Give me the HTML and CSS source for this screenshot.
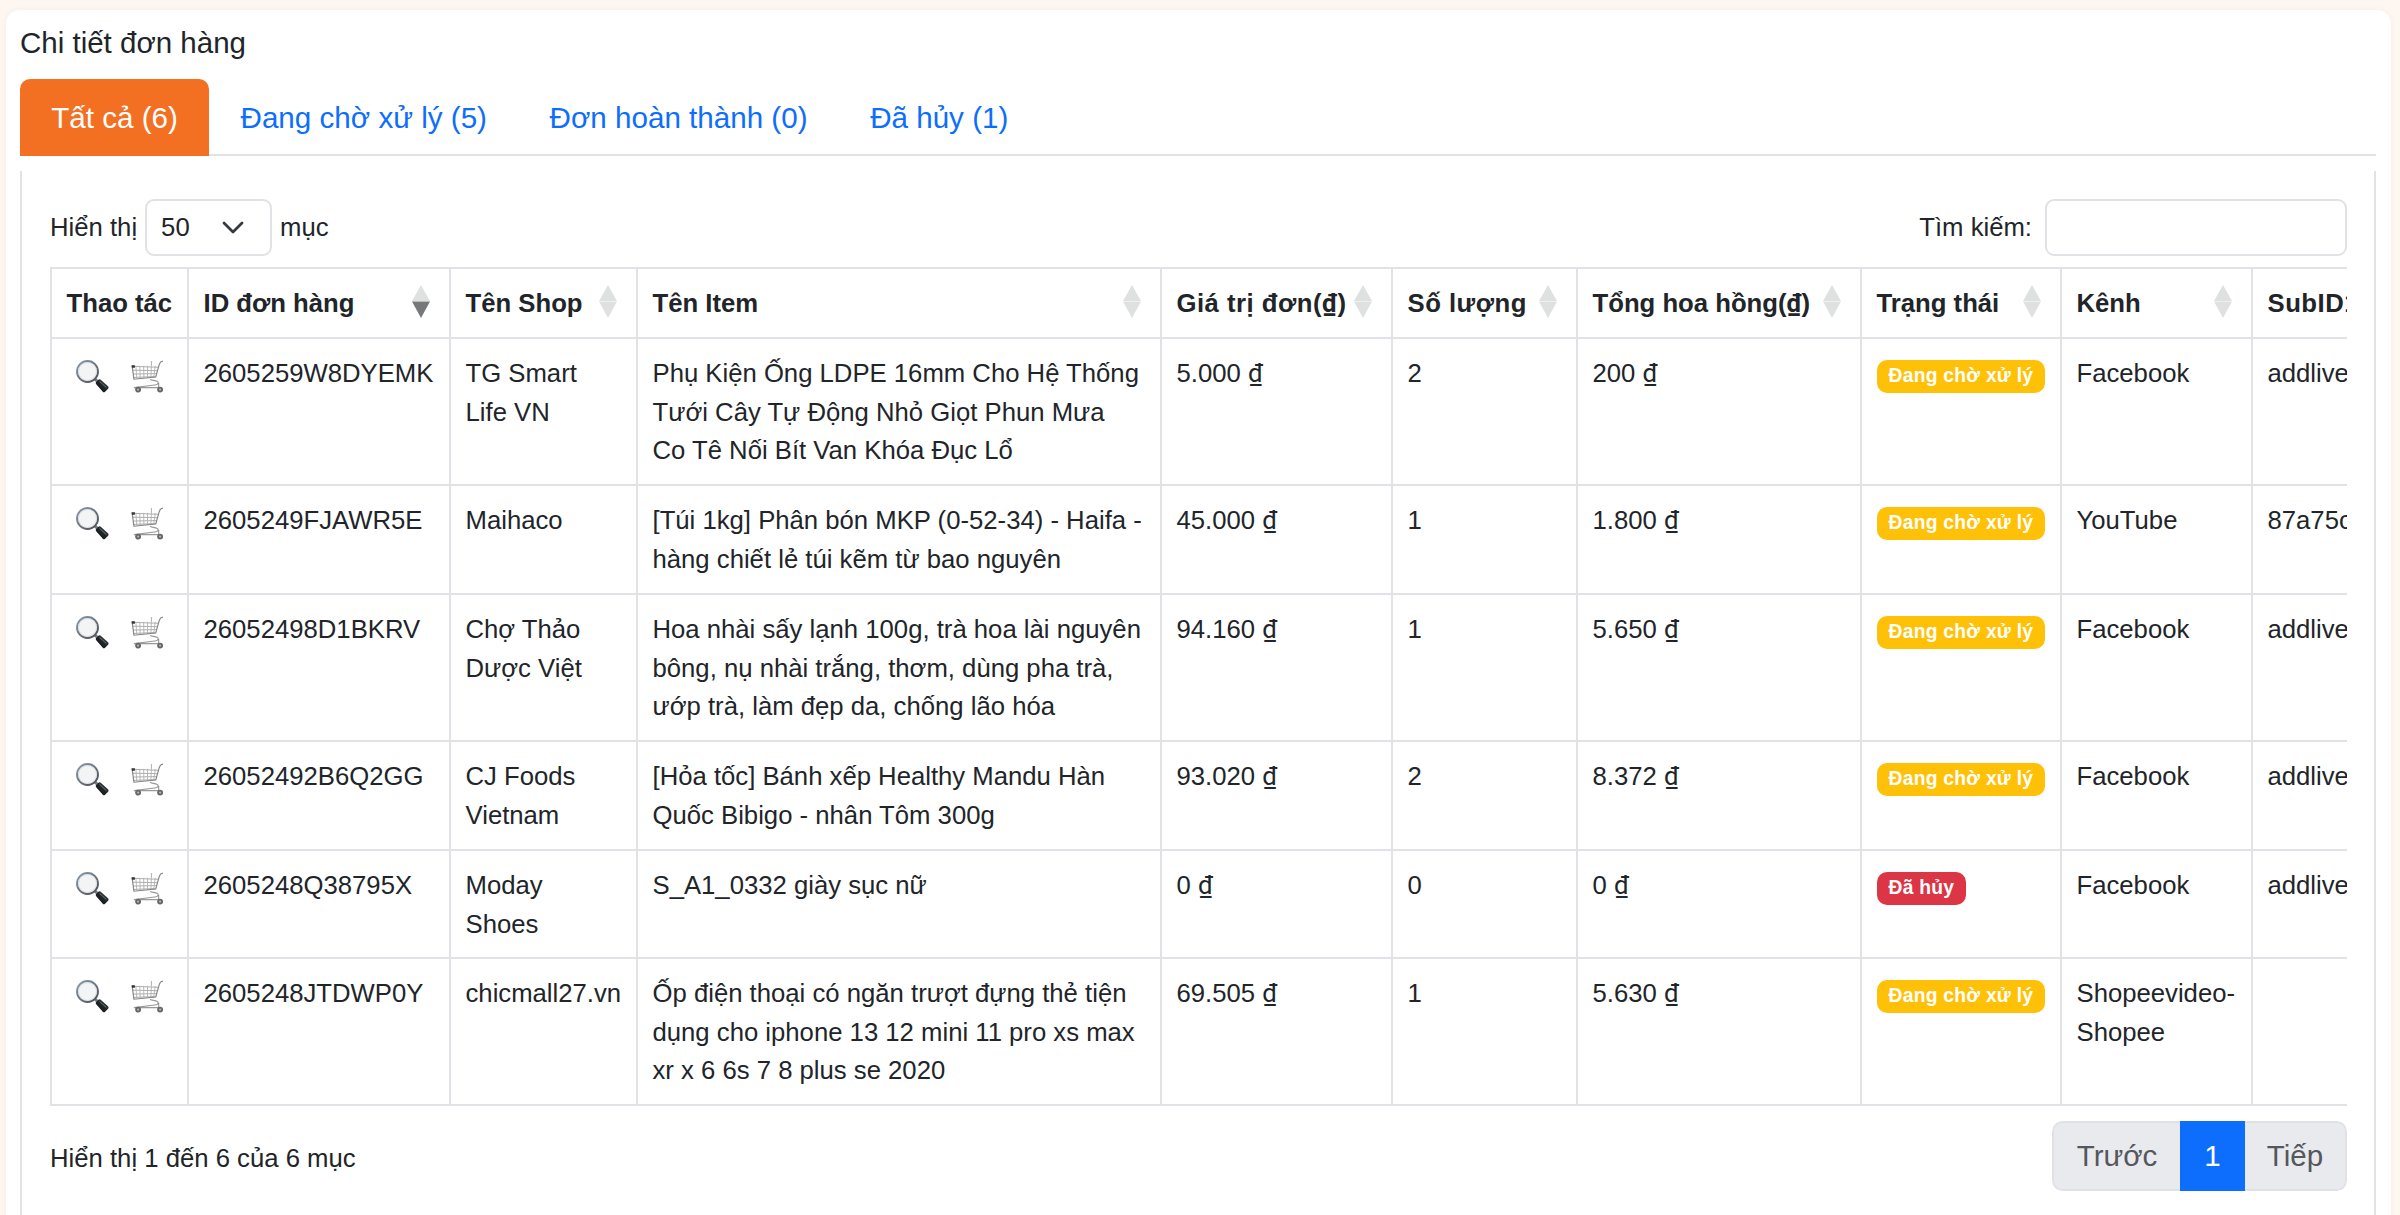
FILE: index.html
```html
<!DOCTYPE html>
<html lang="vi">
<head>
<meta charset="utf-8">
<title>Chi tiết đơn hàng</title>
<link rel="stylesheet" href="styles.css">
</head>
<body>
<svg class="defs" width="0" height="0" aria-hidden="true">
  <defs>
    <linearGradient id="rim" x1="0" y1="0" x2="1" y2="1"><stop offset="0" stop-color="#8a9cb0"/><stop offset="1" stop-color="#4a4d50"/></linearGradient>
    <linearGradient id="grip" x1="0" y1="1" x2="1" y2="0"><stop offset="0" stop-color="#0d0f10"/><stop offset=".6" stop-color="#24292b"/><stop offset="1" stop-color="#566060"/></linearGradient>
  </defs>
  <symbol id="magnifier" viewBox="0 0 33 33">
    <path d="M19 19l3 3" stroke="#77797b" stroke-width="3"/>
    <circle cx="11.500" cy="11.500" r="10.500" fill="#f3f4f5" stroke="url(#rim)" stroke-width="1.900"/>
    <circle cx="11.500" cy="11.500" r="9" fill="none" stroke="#d5d8da" stroke-width=".8"/>
    <path d="M20.200 24.200q-1-1.200 0-2.300l2.200-2.200q1.200-1 2.300 0l7.300 6.600q1.200 1.200.1 2.400l-3 3q-1.200 1.100-2.300 0z" fill="url(#grip)"/>
    <path d="M23.500 21.300l6.800 6.200" stroke="#7b8585" stroke-width=".9"/>
  </symbol>
  <symbol id="cart" viewBox="0 0 34 34">
    <g fill="none" stroke="#a0a0a0" stroke-width=".9">
      <path d="M1.500 6.500L28 7.500M2 10.500l25 .5M2.300 14.500l23.700-.5M2.700 18l22.300-1M21 1v5"/>
      <path d="M5 6l1 13M9 6l.5 13M13 6l.3 12.500M17 6v12.500M21 6l-.5 12M25 6l-1.500 11.500" stroke="#b0b0b0"/>
      <path d="M33 1c-3 .5-3.500 2-4 4l-3.500 12.500L3 19.800 1.200 6" stroke="#858585" stroke-width="1.200"/>
      <path d="M20 19.500c0 2 8 1 8 4 0 2-3 2.500-6 2.500L3 28.500h25.500v-5" stroke="#999" stroke-width="1.200"/>
    </g>
    <path d="M.5 5.500h3.500v2.500H1z" fill="#333"/>
    <g fill="#b5b5b5" stroke="#666" stroke-width="1.900"><circle cx="7.300" cy="30.500" r="2.100"/><circle cx="30" cy="30.500" r="2.100"/></g>
  </symbol>
  <symbol id="sort" viewBox="0 0 18 33"><path d="M9 0l9 16H0z" fill="#dfe1e0"/><path d="M0 16.500h18L9 33z"/></symbol>
</svg>
<main class="card">
  <h1 class="title">Chi tiết đơn hàng</h1>
  <nav class="tabs">
    <a class="tab active">Tất cả (6)</a>
    <a class="tab">Đang chờ xử lý (5)</a>
    <a class="tab">Đơn hoàn thành (0)</a>
    <a class="tab">Đã hủy (1)</a>
  </nav>
  <section class="panel">
    <div class="controls">
      <div class="length"><span>Hiển thị</span><div class="select"><span>50</span><svg width="22" height="14" viewBox="0 0 22 14"><path d="M2 2l9 9 9-9" fill="none" stroke="#343a40" stroke-width="2.800" stroke-linecap="round" stroke-linejoin="round"/></svg></div><span>mục</span></div>
      <label class="search"><span>Tìm kiếm:</span><input type="text"></label>
    </div>
    <div class="scroll">
      <table>
        <colgroup><col class="c1"><col class="c2"><col class="c3"><col class="c4"><col class="c5"><col class="c6"><col class="c7"><col class="c8"><col class="c9"><col class="c10"></colgroup>
        <thead>
          <tr class="head">
            <th>Thao tác</th>
            <th><div class="th">ID đơn hàng<svg class="sort desc"><use href="#sort"/></svg></div></th>
            <th><div class="th">Tên Shop<svg class="sort"><use href="#sort"/></svg></div></th>
            <th><div class="th">Tên Item<svg class="sort"><use href="#sort"/></svg></div></th>
            <th><div class="th"><span class="wide">Giá trị đơn(<span class="dong">₫</span>)</span><svg class="sort"><use href="#sort"/></svg></div></th>
            <th><div class="th"><span class="wide">Số lượng</span><svg class="sort"><use href="#sort"/></svg></div></th>
            <th><div class="th"><span>Tổng hoa hồng(<span class="dong">₫</span>)</span><svg class="sort"><use href="#sort"/></svg></div></th>
            <th><div class="th">Trạng thái<svg class="sort"><use href="#sort"/></svg></div></th>
            <th><div class="th">Kênh<svg class="sort"><use href="#sort"/></svg></div></th>
            <th><span class="wide">SubID1</span></th>
          </tr>
        </thead>
        <tbody>
          <tr class="tall"><td><div class="actions"><svg><use href="#magnifier"/></svg><svg><use href="#cart"/></svg></div></td><td>2605259W8DYEMK</td><td>TG Smart<br>Life VN</td><td>Phụ Kiện Ống LDPE 16mm Cho Hệ Thống<br>Tưới Cây Tự Động Nhỏ Giọt Phun Mưa<br>Co Tê Nối Bít Van Khóa Đục Lổ</td><td>5.000 <span class="dong">₫</span></td><td>2</td><td>200 <span class="dong">₫</span></td><td><span class="badge">Đang chờ xử lý</span></td><td>Facebook</td><td>addlive</td></tr>
          <tr class="mid"><td><div class="actions"><svg><use href="#magnifier"/></svg><svg><use href="#cart"/></svg></div></td><td>2605249FJAWR5E</td><td>Maihaco</td><td>[Túi 1kg] Phân bón MKP (0-52-34) - Haifa -<br>hàng chiết lẻ túi kẽm từ bao nguyên</td><td>45.000 <span class="dong">₫</span></td><td>1</td><td>1.800 <span class="dong">₫</span></td><td><span class="badge">Đang chờ xử lý</span></td><td>YouTube</td><td>87a75c</td></tr>
          <tr class="tall"><td><div class="actions"><svg><use href="#magnifier"/></svg><svg><use href="#cart"/></svg></div></td><td>26052498D1BKRV</td><td>Chợ Thảo<br>Dược Việt</td><td>Hoa nhài sấy lạnh 100g, trà hoa lài nguyên<br>bông, nụ nhài trắng, thơm, dùng pha trà,<br>ướp trà, làm đẹp da, chống lão hóa</td><td>94.160 <span class="dong">₫</span></td><td>1</td><td>5.650 <span class="dong">₫</span></td><td><span class="badge">Đang chờ xử lý</span></td><td>Facebook</td><td>addlive</td></tr>
          <tr class="mid"><td><div class="actions"><svg><use href="#magnifier"/></svg><svg><use href="#cart"/></svg></div></td><td>26052492B6Q2GG</td><td>CJ Foods<br>Vietnam</td><td>[Hỏa tốc] Bánh xếp Healthy Mandu Hàn<br>Quốc Bibigo - nhân Tôm 300g</td><td>93.020 <span class="dong">₫</span></td><td>2</td><td>8.372 <span class="dong">₫</span></td><td><span class="badge">Đang chờ xử lý</span></td><td>Facebook</td><td>addlive</td></tr>
          <tr class="short"><td><div class="actions"><svg><use href="#magnifier"/></svg><svg><use href="#cart"/></svg></div></td><td>2605248Q38795X</td><td>Moday<br>Shoes</td><td>S_A1_0332 giày sục nữ</td><td>0 <span class="dong">₫</span></td><td>0</td><td>0 <span class="dong">₫</span></td><td><span class="badge cancelled">Đã hủy</span></td><td>Facebook</td><td>addlive</td></tr>
          <tr class="tall"><td><div class="actions"><svg><use href="#magnifier"/></svg><svg><use href="#cart"/></svg></div></td><td>2605248JTDWP0Y</td><td>chicmall27.vn</td><td>Ốp điện thoại có ngăn trượt đựng thẻ tiện<br>dụng cho iphone 13 12 mini 11 pro xs max<br>xr x 6 6s 7 8 plus se 2020</td><td>69.505 <span class="dong">₫</span></td><td>1</td><td>5.630 <span class="dong">₫</span></td><td><span class="badge">Đang chờ xử lý</span></td><td>Shopeevideo-<br>Shopee</td><td></td></tr>
        </tbody>
      </table>
    </div>
    <footer class="foot">
      <span>Hiển thị 1 đến 6 của 6 mục</span>
      <div class="pager"><a class="prev">Trước</a><a class="current">1</a><a class="next">Tiếp</a></div>
    </footer>
  </section>
</main>
</body>
</html>
```

FILE: styles.css
```css
* { box-sizing: border-box; }
body {
  margin: 0;
  height: 1215px;
  padding: 10px 9px 0 6px;
  overflow: hidden;
  background: #fef6f1;
  color: #212529;
  font: 25.7px/38.6px "Liberation Sans", Arial, sans-serif;
}
.defs { position: absolute; }
.card {
  height: 1240px;
  padding: 0 15px 0 14px;
  border-radius: 14px;
  background: #fff;
  box-shadow: 0 0 6px rgba(120, 70, 30, .05);
}
.title { margin: 0; padding-top: 11px; height: 69px; font-size: 29.5px; line-height: 44px; font-weight: 400; }
.tabs { display: flex; height: 77px; box-shadow: inset 0 -2px #e0e2e5; }
.tab { padding: 16px 31.3px 0; font-size: 29.6px; line-height: 46px; color: #0d6efd; white-space: nowrap; }
.tab.active { background: #f37022; color: #fff; border-radius: 10px 10px 0 0; }
.panel { margin-top: 15px; height: 1060px; padding: 28px 27px 0 28px; border: solid #e0e2e5; border-width: 0 2px; }
.controls { display: flex; justify-content: space-between; height: 57px; }
.length, .search { display: flex; align-items: center; }
.select {
  display: flex; align-items: center; justify-content: space-between;
  width: 127px; height: 57px; margin: 0 8px; padding: 0 26px 0 14px;
  border: 2px solid #e0e2e5; border-radius: 9px;
}
.search { gap: 13px; }
.search input { width: 302px; height: 57px; border: 2px solid #e0e2e5; border-radius: 9px; background: #fff; }
.scroll { margin-top: 11px; overflow: hidden; }
table { table-layout: fixed; width: 2351px; border-collapse: collapse; white-space: nowrap; }
.c1 { width: 137px; } .c2 { width: 262px; } .c3 { width: 187px; } .c4 { width: 524px; } .c5 { width: 231px; }
.c6 { width: 185px; } .c7 { width: 284px; } .c8 { width: 200px; } .c9 { width: 191px; } .c10 { width: 150px; }
th, td { border: 2px solid #e0e2e5; padding: 0 14px 0 14.5px; text-align: left; vertical-align: top; }
td { padding-top: 15px; }
th { vertical-align: middle; }
.head { height: 70px; }
.tall { height: 147px; }
.mid { height: 109px; }
.short { height: 108px; }
.th { display: flex; justify-content: space-between; align-items: center; margin-right: 5px; }
.wide { letter-spacing: .5px; }
.dong { font-family: Roboto, "Liberation Sans", sans-serif; line-height: 1; }
.sort { flex: none; width: 18px; height: 33px; margin-top: -4px; fill: #dfe1e0; }
.sort.desc { fill: #77787a; }
.actions { display: flex; gap: 22px; padding: 6px 0 0 9px; }
.actions svg { width: 33px; height: 33px; flex: none; }
.badge {
  display: block; width: fit-content; height: 33px; margin-top: 6px; padding: 0 12px;
  border-radius: 10px; background: #ffc107; color: #fff; font-size: 19.3px; line-height: 32px; font-weight: 700;
  letter-spacing: .25px;
}
.cancelled { background: #dc3545; }
.foot { display: flex; justify-content: space-between; align-items: flex-start; padding-top: 15px; }
.foot > span { margin-top: 18px; }
.pager { display: flex; width: 295px; height: 70px; border-radius: 10px; overflow: hidden; font-size: 29.5px; line-height: 66px; }
.pager a { border: 2px solid #dfe1e5; background: #e9eaee; color: #54575b; text-align: center; }
.pager .prev { width: 128px; border-right: 0; border-radius: 10px 0 0 10px; }
.pager .current { width: 65px; background: #0d6efd; border-color: #0d6efd; color: #fff; }
.pager .next { flex: 1; border-left: 0; border-radius: 0 10px 10px 0; }
```
